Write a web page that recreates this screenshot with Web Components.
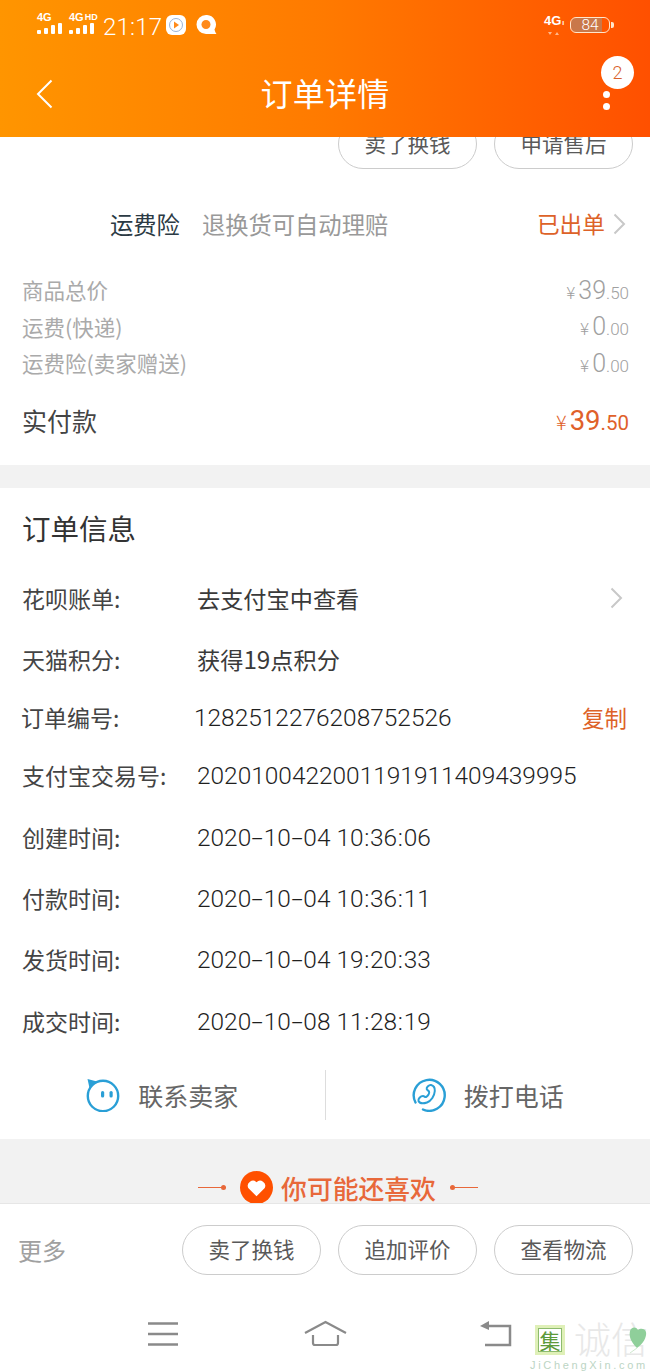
<!DOCTYPE html>
<html lang="zh"><head><meta charset="utf-8">
<style>
html,body{margin:0;padding:0;background:#fff}
body{font-family:"Roboto","Noto Sans CJK SC",sans-serif;width:650px;height:1372px;overflow:hidden}
</style></head><body>
<order-page>
  <app-header slot="header"></app-header>
  <div slot="main" style="display:block">
    <action-bar>
      <pill-button>卖了换钱</pill-button>
      <pill-button>申请售后</pill-button>
    </action-bar>
    <insurance-row></insurance-row>
    <price-list>
      <price-row label="商品总价" int="39" dec="50"></price-row>
      <price-row label="运费(快递)" int="0" dec="00"></price-row>
      <price-row label="运费险(卖家赠送)" int="0" dec="00"></price-row>
      <price-row total label="实付款" int="39" dec="50"></price-row>
    </price-list>
    <info-card>
      <info-row label="花呗账单:" arrow cjk>去支付宝中查看</info-row>
      <info-row label="天猫积分:" cjk>获得<span style="font-size:24.3px">19</span>点积分</info-row>
      <info-row label="订单编号:" copy shift>1282512276208752526</info-row>
      <info-row label="支付宝交易号:">2020100422001191911409439995</info-row>
      <info-row label="创建时间:" date style="margin-top:1px">2020-10-04 10:36:06</info-row>
      <info-row label="付款时间:" date>2020-10-04 10:36:11</info-row>
      <info-row label="发货时间:" date>2020-10-04 19:20:33</info-row>
      <info-row label="成交时间:" date style="margin-top:1px">2020-10-08 11:28:19</info-row>
    </info-card>
    <contact-bar></contact-bar>
    <like-band></like-band>
  </div>
  <div slot="footer" style="display:block">
    <footer-bar></footer-bar>
    <system-nav></system-nav>
  </div>
</order-page>
<script>
function def(name, html){
  customElements.define(name, class extends HTMLElement{
    constructor(){super();this.attachShadow({mode:'open'});}
    connectedCallback(){ this.shadowRoot.innerHTML = typeof html==='function'?html(this):html; }
  });
}
const CJK='"Noto Sans CJK SC",sans-serif';
const CHEV='<svg width="13" height="22" viewBox="0 0 13 22"><path d="M1.500 1.500L11 11l-9.500 9.500" fill="none" stroke="#c8c8c8" stroke-width="2"/></svg>';
def('order-page',`<style>
:host{display:flex;flex-direction:column;width:650px;height:1372px;overflow:hidden;background:#fff;position:relative}
.main{flex:1;min-height:0;overflow:hidden}
.head{position:relative;z-index:2}
</style><div class="head"><slot name="header"></slot></div><div class="main"><slot name="main"></slot></div><slot name="footer"></slot>`);

const bars='<div class="bars"><i style="height:4px"></i><i style="height:6px"></i><i style="height:9px"></i><i style="height:11px"></i></div>';
def('app-header',`<style>
:host{display:block;height:137px;background:linear-gradient(90deg,#ff9500 0%,#ff7a00 50%,#ff5000 100%);color:#fff;box-sizing:border-box}
.status{height:50px;display:flex;align-items:flex-start;padding:13px 40px 0 37px;box-sizing:border-box;font-family:Roboto,sans-serif}
.sig{width:26px;margin-right:6px}
.sig b{display:block;font:700 11px/9px "Liberation Sans",sans-serif;white-space:nowrap}
.sig sup{font-size:9px;line-height:8px;vertical-align:1px;margin-left:1px}
.bars{display:flex;align-items:flex-end;gap:3px;height:11px;margin-top:1px}
.bars i{display:block;width:4px;background:#fff;border-radius:1px}
.time{font-size:24px;line-height:30px;margin:-1px 0 0 2px;font-weight:300;letter-spacing:.2px}
.ic{margin-top:2px;margin-left:4px;display:block}
.right{margin-left:auto;display:flex;align-items:flex-start}
.g4{width:26px;margin-top:2px;font:700 13px/12px "Liberation Sans",sans-serif;white-space:nowrap}
.g4 small{font-size:7px;margin-left:1px}
.g4 svg{display:block;margin:3px 0 0 4px}
.bat{width:40px;height:16px;margin-top:4px;border:1.5px solid #ffe6cc;border-radius:6px;box-sizing:border-box;position:relative;display:flex;align-items:center;justify-content:center;font-size:15.500px;font-weight:300;background:linear-gradient(90deg,#c9784a 82%,transparent 82%);background-clip:padding-box}
.bat:after{content:"";position:absolute;right:-4.500px;top:3.500px;width:2.500px;height:6px;background:#ffe6cc;border-radius:0 2px 2px 0}
.nav{height:87px;display:flex;align-items:center;justify-content:center;position:relative}
.title{font:400 32px/40px ${CJK};margin-top:-3px;letter-spacing:.3px}
.back{position:absolute;left:36px;top:29px}
.dots{position:absolute;left:603px;top:41px;width:7px;display:flex;flex-direction:column;gap:5px}
.dots i{display:block;width:7px;height:7px;border-radius:50%;background:#fff}
.badge{position:absolute;left:601px;top:6px;width:33px;height:33px;border-radius:50%;background:#fff;color:#d9612c;font:300 18px/33px Roboto,sans-serif;text-align:center}
</style>
<div class="status">
 <div class="sig"><b>4G</b>${bars}</div>
 <div class="sig"><b>4G<sup>HD</sup></b>${bars}</div>
 <span class="time">21:17</span>
 <svg class="ic" width="20" height="20" viewBox="0 0 20 20"><rect width="20" height="20" rx="6" fill="#fff"/><circle cx="10" cy="10" r="6.500" fill="none" stroke="#9bb4d8" stroke-width="1"/><path d="M8 6.500l5 3.500-5 3.500z" fill="#ff8a1a"/></svg>
 <svg class="ic" style="margin-left:10px" width="21" height="19" viewBox="0 0 21 19"><path d="M10 0a9.500 9.500 0 1 0 0 19h10.500c-1-1.500-1.500-2.500-2-4.500A9.500 9.500 0 0 0 10 0z" fill="#fff"/><path d="M10 5a4.500 4.500 0 1 0 0 9c2.500 0 4.500-2 4.500-4.500S12.500 5 10 5z" fill="#ff8a1a"/></svg>
 <div class="right">
  <div class="g4">4G<small>ı</small><svg width="12" height="4" viewBox="0 0 12 4"><path d="M0 0h4L2 3zM7 3h4L9 0z" fill="#ffb88a"/></svg></div>
  <div class="bat">84</div>
 </div>
</div>
<div class="nav">
 <svg class="back" width="17" height="30" viewBox="0 0 17 30"><path d="M15.500 1.500L2 15l13.500 13.500" fill="none" stroke="#fff" stroke-width="2"/></svg>
 <span class="title">订单详情</span>
 <div class="badge">2</div>
 <div class="dots"><i></i><i></i></div>
</div>`);

def('pill-button',`<style>
:host{display:flex;align-items:center;justify-content:center;width:139px;height:50px;padding-bottom:2px;box-sizing:border-box;border:1px solid #ccc;border-radius:25px;background:#fff;color:#595959;font:400 21.500px/30px ${CJK}}
</style><slot></slot>`);

def('action-bar',`<style>
:host{display:flex;justify-content:flex-end;gap:17px;padding-right:17px;margin-top:-18px;height:50px}
</style><slot></slot>`);

def('insurance-row',`<style>
:host{display:flex;align-items:center;height:44px;margin-top:33px;padding-left:110px;padding-right:24px;font:400 23.300px/32px ${CJK}}
.a{color:#2b3a44;margin-right:22px}
.b{color:#999;flex:1}
.c{color:#dd6228;margin-right:8px;font-size:22.700px}
svg{display:block}
</style><span class="a">运费险</span><span class="b">退换货可自动理赔</span><span class="c">已出单</span>${CHEV}`);

def('price-list',`<style>
:host{display:block;padding:0 21px 0 22px;margin-top:26px;height:193px;border-bottom:23px solid #f2f2f2}
</style><slot></slot>`);

def('price-row',h=>{
 const t=h.hasAttribute('total');
 return `<style>
:host{display:flex;align-items:center;justify-content:space-between;height:36.5px;${t?'margin-top:20px;':''}color:${t?'#e0612a':'#a0a0a0'}}
.l{font:400 ${t?25:21.500}px/30px ${CJK};color:${t?'#444':'#aaa'}}
.v{display:flex;align-items:baseline;font-family:Roboto,sans-serif;font-weight:300;${t?'margin-top:2px;':''}}
.y{font-size:${t?20:17}px;margin-right:${t?3:3}px;font-family:${CJK}}
.i{font-size:${t?27.5:25}px;${t?'font-weight:400':''}}
.d{font-size:${t?20.5:17}px;${t?'font-weight:400':''}}
</style><span class="l">${h.getAttribute('label')}</span><span class="v"><span class="y">¥</span><span class="i">${h.getAttribute('int')}</span><span class="d">.${h.getAttribute('dec')}</span></span>`});

def('info-card',`<style>
:host{display:block;padding-left:22px;padding-right:23px}
h2{margin:0;height:79px;font:400 28.500px/79px ${CJK};color:#333}
.r{display:flex;flex-direction:column}
</style><h2>订单信息</h2><div class="r"><slot></slot></div>`);

customElements.define('info-row', class extends HTMLElement{
  constructor(){super();this.attachShadow({mode:'open'});}
  connectedCallback(){
    const h=this, s=h.hasAttribute('shift'), cjk=h.hasAttribute('cjk'), date=h.hasAttribute('date');
    let val='<slot></slot>';
    if(date){
      val=h.textContent.replace(/-/g,'<span class="dash">-</span>').replace(/:/g,'<span class="colon">:</span>');
    }
    h.shadowRoot.innerHTML=`<style>
:host{display:flex;align-items:center;height:${s?55:61}px;font:300 24.45px/30px Roboto,${CJK};color:#1f1f1f;${s?'margin-left:-1px;':''}}
.l{width:${s?173:175}px;flex:none;white-space:nowrap;font-family:${CJK};font-size:23px;font-weight:400;color:#444}
.v{flex:1;white-space:nowrap;${cjk?'font-size:23.2px;font-weight:400;color:#3a3a3a;font-family:'+CJK+';':'margin-top:3px;'}}
.dash{display:inline-block;width:12.500px;text-align:center;transform:scaleX(1.7)}
.colon{display:inline-block;width:6.500px;text-align:center}
.c{color:#dd6228;font:400 22.500px/30px ${CJK}}
svg{display:block;margin-right:4px}
</style><span class="l">${h.getAttribute('label')}</span><span class="v">${val}</span>${h.hasAttribute('copy')?'<span class="c">复制</span>':''}${h.hasAttribute('arrow')?CHEV:''}`;
  }
});

def('contact-bar',`<style>
:host{display:flex;height:89px;margin-top:-1px;align-items:center;color:#666;font:400 25px/34px ${CJK}}
.c{flex:1;display:flex;align-items:center;justify-content:center;gap:18px;height:50px}
.c+.c{border-left:1px solid #ddd}
svg{display:block}
</style>
<div class="c"><svg width="34" height="34" viewBox="0 0 34 34"><circle cx="17" cy="18" r="15.200" fill="none" stroke="#2a9fd6" stroke-width="2.400"/><path d="M1.500 1L11 3.500 3.500 10z" fill="#2a9fd6"/><rect x="15" y="13" width="3.200" height="6.500" rx="1.600" fill="#2a9fd6"/><rect x="23.500" y="13" width="3.200" height="6.500" rx="1.600" fill="#2a9fd6"/></svg>联系卖家</div>
<div class="c"><svg width="34" height="34" viewBox="0 0 34 34"><path d="M3.500 24.500A15.500 15.500 0 1 1 11 31.500" fill="none" stroke="#2a9fd6" stroke-width="2.400" stroke-linecap="round"/><path d="M19 7c2.500.6 4 3 3.800 6-.4 5-3.500 10-7.800 11.500-3 1-7 1.500-8.500-1.500-.7-2 2-5 4.500-5 1.500 0 1.800 1.500 3 1 2-1 3.800-3.800 3-5.500-.6-1.200-2-1.200-2.300-2.500-.4-1.800 2.300-4.300 4.300-4z" fill="none" stroke="#2a9fd6" stroke-width="2"/></svg>拨打电话</div>`);

def('like-band',`<style>
:host{display:flex;justify-content:center;align-items:flex-start;height:64px;background:#f2f2f2;padding:32px 0 0 26px;box-sizing:border-box;color:#e8683a;font:500 25.800px/30px ${CJK};overflow:hidden}
.line{width:28px;height:1px;background:#e8683a;position:relative;margin-top:16px}
.line:after{content:"";position:absolute;top:-2px;width:5px;height:5px;border-radius:50%;background:#e8683a;right:0}
.line.l{margin-right:14px}
.line.r{margin-left:14px}.line.r:after{left:0;right:auto}
svg{display:block;margin-right:8px;flex:none}
.t{margin-top:2px}
</style><span class="line l"></span><svg width="33" height="33" viewBox="0 0 34 34"><circle cx="17" cy="17" r="17" fill="#ff5000"/><path d="M17 26l-8.500-8.500a5.300 5.300 0 0 1 8.500-6 5.300 5.300 0 0 1 8.500 6z" fill="#fff"/></svg><span class="t">你可能还喜欢</span><span class="line r"></span>`);

def('footer-bar',`<style>
:host{display:flex;align-items:center;height:95px;box-sizing:border-box;border-top:1px solid #e6e6e6;padding:0 17px 2px 18px;gap:17px;background:#fff}
.m{flex:1;color:#a0a0a0;font:400 24px/30px ${CJK}}
</style><span class="m">更多</span><pill-button>卖了换钱</pill-button><pill-button>追加评价</pill-button><pill-button>查看物流</pill-button>`);

def('system-nav',`<style>
:host{display:block;height:74px;position:relative;background:#fff}
svg{position:absolute;display:block}
.ji{position:absolute;left:535px;top:27px;width:30px;height:30px;background:#fff;color:#5d9a3a;font:400 21px/24px ${CJK};text-align:center;border:3px solid #dff0b8;outline:1px solid #8dbb6e;outline-offset:-4px;box-sizing:border-box}
.cx{position:absolute;left:574px;top:23px;color:#e8e8e8;font:300 37px/34px ${CJK};white-space:nowrap}
.en{position:absolute;left:530px;top:61px;color:#bcd5c4;font:400 11px/12px "Liberation Sans",sans-serif;letter-spacing:2.700px;white-space:nowrap}
</style>
<svg style="left:148px;top:24px" width="30" height="24" viewBox="0 0 30 24"><path d="M0 1.500h30M0 12h30M0 22.500h30" stroke="#8a8a8a" stroke-width="2.500"/></svg>
<svg style="left:304px;top:22px" width="43" height="27" viewBox="0 0 43 27"><path d="M1 13L21.500 2 42 13M9 15v8q0 2 2 2h21q2 0 2-2v-8" fill="none" stroke="#8a8a8a" stroke-width="2.200"/></svg>
<svg style="left:479px;top:23px" width="33" height="26" viewBox="0 0 33 26"><path d="M8 5h23v19H6" fill="none" stroke="#8a8a8a" stroke-width="2.500"/><path d="M10 0v9L1 5z" fill="#8a8a8a"/></svg>
<div class="ji">集</div><div class="cx">诚信</div><div class="en">JiChengXin.com</div>
<svg style="left:627px;top:26px" width="22" height="30" viewBox="0 0 22 30"><path d="M10 24C3 17 2 12 3 7c1-4 6-5 8-1 2-2 7-2 8 2 1 5-3 12-9 16z" fill="#8fcf9a"/><path d="M10 24L3 29" stroke="#cfe8cf" fill="none"/></svg>`);
</script>
</body></html>
